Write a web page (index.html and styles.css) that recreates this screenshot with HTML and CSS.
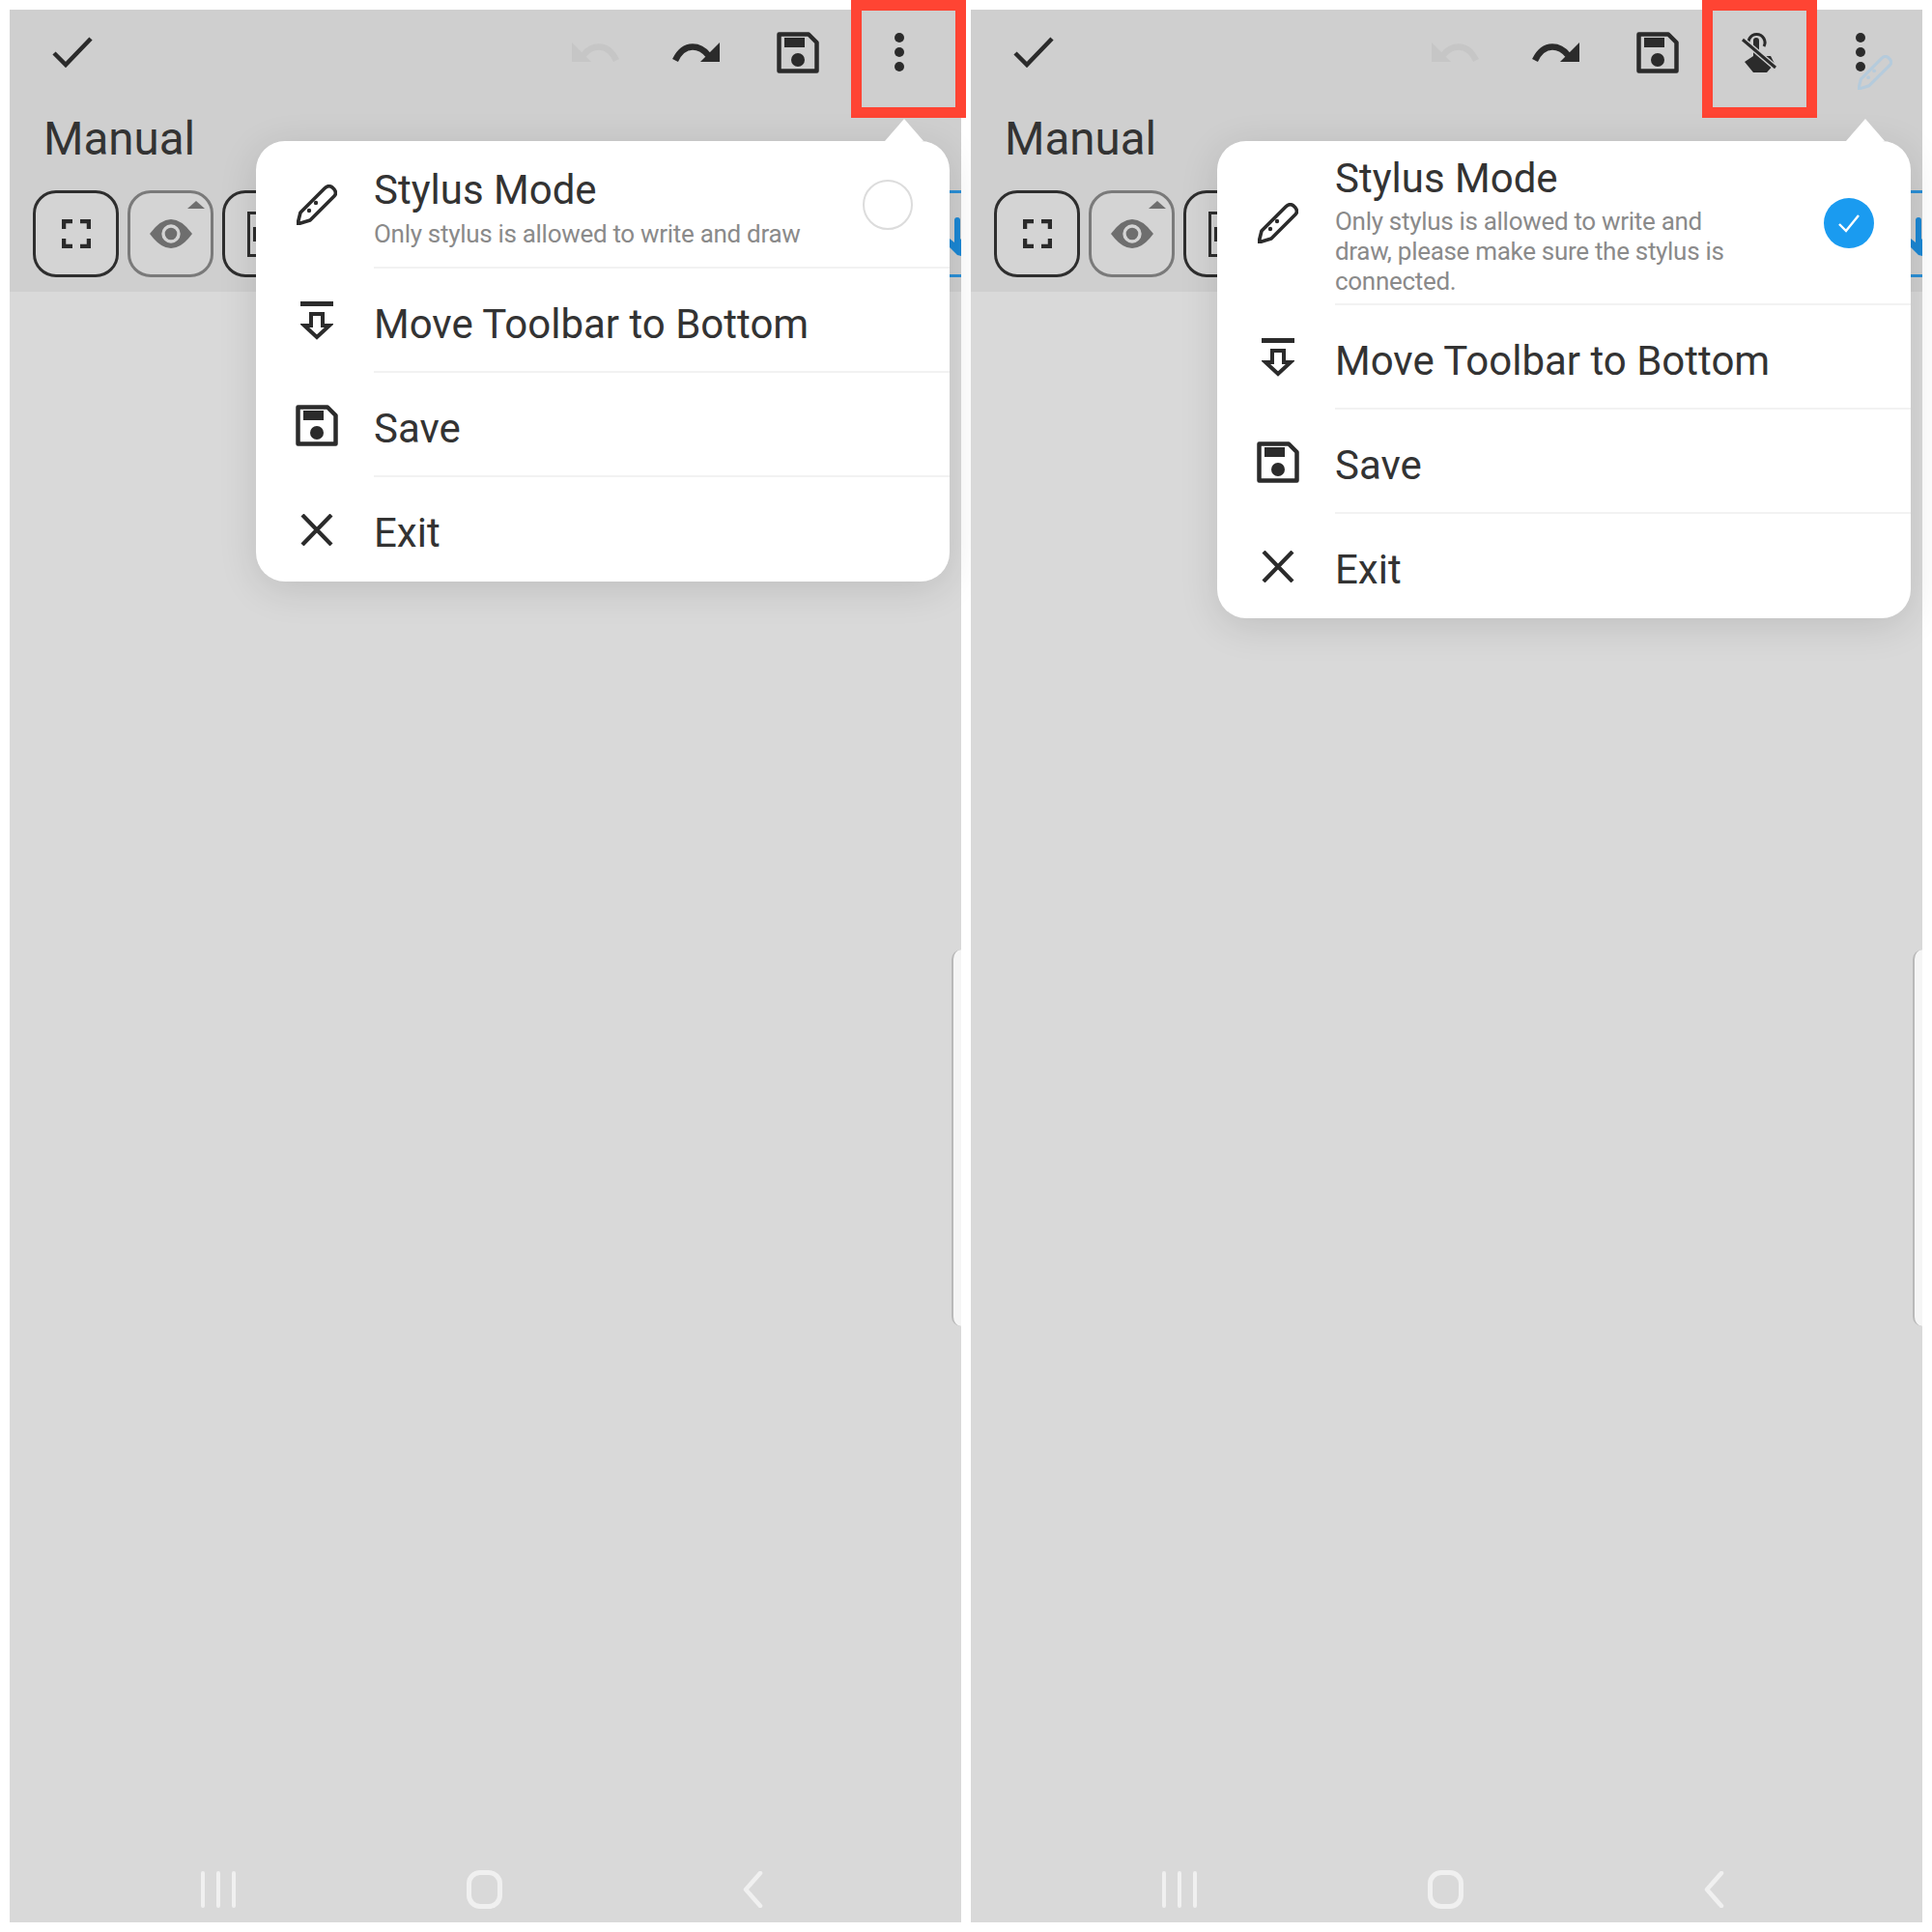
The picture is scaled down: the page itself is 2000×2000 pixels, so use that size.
FILE: index.html
```html
<!DOCTYPE html>
<html>
<head>
  <title>Stylus Mode</title>
  <link rel="stylesheet" href="styles.css">
</head>
<body>
  <svg class="icon-defs">
    <symbol id="i-check" viewBox="0 0 42 32">
      <path d="M2 17 L14 29 L40 2" fill="none" stroke="currentColor" stroke-width="4.5"/>
    </symbol>
    <symbol id="i-redo" viewBox="0 0 50 21">
      <path d="M3 18.5 C8 8 14 4.5 21 4.5 C28 4.5 33 8 37 13" fill="none" stroke="currentColor" stroke-width="6.5"/>
      <path d="M49 0 V20 H29 Z" fill="currentColor"/>
    </symbol>
    <symbol id="i-save" viewBox="0 0 44 43">
      <path d="M2.5 2.5 H33 L41.5 11 V40.5 H2.5 Z" fill="none" stroke="currentColor" stroke-width="4.5" stroke-linejoin="round"/>
      <rect x="8" y="6" width="21" height="10" fill="currentColor"/>
      <circle cx="22" cy="29" r="7" fill="currentColor"/>
    </symbol>
    <symbol id="i-pen" viewBox="0 0 42 42">
      <path d="M1 41 L4 29 L29 4 Q33 0 37 3 L39 5 Q42 9 39 12 L14 37 Z" fill="none" stroke="currentColor" stroke-width="3.6" stroke-linejoin="round"/>
      <circle cx="13" cy="27" r="2.2" fill="currentColor"/>
      <circle cx="20" cy="19" r="2.2" fill="currentColor"/>
    </symbol>
    <symbol id="i-bottom" viewBox="0 0 34 40">
      <rect x="0" y="0" width="34" height="5" fill="currentColor"/>
      <path d="M11 13 H23 V25 H30 L17 37 L4 25 H11 Z" fill="none" stroke="currentColor" stroke-width="4"/>
    </symbol>
    <symbol id="i-close" viewBox="0 0 34 33">
      <path d="M2 1 L32 32 M32 1 L2 32" fill="none" stroke="currentColor" stroke-width="4.2"/>
    </symbol>
    <symbol id="i-full" viewBox="0 0 30 30">
      <path d="M2 10 V2 H11 M19 2 H28 V10 M2 20 V28 H11 M19 28 H28 V20" fill="none" stroke="currentColor" stroke-width="4.5"/>
    </symbol>
    <symbol id="i-eye" viewBox="0 0 44 30">
      <path d="M0 15 Q11 0 22 0 Q33 0 44 15 Q33 30 22 30 Q11 30 0 15 Z" fill="currentColor"/>
      <circle cx="22" cy="15" r="8" fill="none" stroke="#d4d4d4" stroke-width="3.4"/>
    </symbol>
    <symbol id="i-touch" viewBox="0 0 36 42">
      <path d="M8 15 A8.5 8.5 0 1 1 23 15" fill="none" stroke="currentColor" stroke-width="3"/>
      <path d="M12 24 V9 A3 3 0 0 1 18 9 V25 H30 L34 33 L26 42 H12 L3 31 L12 25 Z" fill="currentColor"/>
      <path d="M1 8 L35 37" stroke="#cfcfcf" stroke-width="6"/>
      <path d="M1 8 L35 37" stroke="currentColor" stroke-width="3"/>
    </symbol>
    <symbol id="i-hand" viewBox="0 0 12 40">
      <path d="M5 3 A3 3 0 0 1 11 3 V22 L12 23 V40 L8 39 L0 31 V22 L5 26 Z" fill="currentColor"/>
    </symbol>
    <symbol id="i-back" viewBox="0 0 22 38">
      <path d="M19 2 L4 19 L19 36" fill="none" stroke="currentColor" stroke-width="4.5" stroke-linecap="round" stroke-linejoin="round"/>
    </symbol>
  </svg>

  <div class="screens">
    <section class="phone">
      <div class="toolbar">
        <div class="actions">
          <svg class="check"><use href="#i-check"/></svg>
          <div class="action-slots">
            <span class="slot"><svg class="undo"><use href="#i-redo"/></svg></span>
            <span class="slot"><svg class="redo"><use href="#i-redo"/></svg></span>
            <span class="slot"><svg class="save"><use href="#i-save"/></svg></span>
            <span class="slot"><span class="dots"><i></i><i></i><i></i></span></span>
          </div>
        </div>
        <div class="title">Manual</div>
        <div class="tools">
          <div class="tool"><svg class="full"><use href="#i-full"/></svg></div>
          <div class="tool tool-eye"><svg class="eye"><use href="#i-eye"/></svg></div>
          <div class="tool tool-doc"><span class="doc"></span></div>
          <div class="tool-blue"><svg class="hand"><use href="#i-hand"/></svg></div>
        </div>
      </div>
      <div class="canvas"></div>
      <div class="navbar">
        <span class="nav-lines"><i></i><i></i><i></i></span>
        <span class="nav-home"></span>
        <svg class="nav-back"><use href="#i-back"/></svg>
      </div>

      <div class="handle"></div>
      <div class="mark mark-more"></div>

      <div class="menu">
        <div class="row row-stylus">
          <div class="row-icon"><svg class="ic-pen"><use href="#i-pen"/></svg></div>
          <div class="row-body">
            <div class="stylus-text">
              <div class="label">Stylus Mode</div>
              <div class="sub">Only stylus is allowed to write and draw</div>
            </div>
            <span class="radio"></span>
          </div>
        </div>
        <div class="row">
          <div class="row-icon"><svg class="ic-bottom"><use href="#i-bottom"/></svg></div>
          <div class="row-body"><div class="label">Move Toolbar to Bottom</div></div>
        </div>
        <div class="row">
          <div class="row-icon"><svg class="ic-save"><use href="#i-save"/></svg></div>
          <div class="row-body"><div class="label">Save</div></div>
        </div>
        <div class="row">
          <div class="row-icon"><svg class="ic-close"><use href="#i-close"/></svg></div>
          <div class="row-body"><div class="label">Exit</div></div>
        </div>
      </div>
    </section>

    <section class="phone">
      <div class="toolbar">
        <div class="actions">
          <svg class="check"><use href="#i-check"/></svg>
          <div class="action-slots">
            <span class="slot"><svg class="undo"><use href="#i-redo"/></svg></span>
            <span class="slot"><svg class="redo"><use href="#i-redo"/></svg></span>
            <span class="slot"><svg class="save"><use href="#i-save"/></svg></span>
            <span class="slot"><svg class="touch"><use href="#i-touch"/></svg></span>
            <span class="slot"><span class="dots"><i></i><i></i><i></i></span></span>
          </div>
        </div>
        <div class="title">Manual</div>
        <div class="tools">
          <div class="tool"><svg class="full"><use href="#i-full"/></svg></div>
          <div class="tool tool-eye"><svg class="eye"><use href="#i-eye"/></svg></div>
          <div class="tool tool-doc"><span class="doc"></span></div>
          <div class="tool-blue"><svg class="hand"><use href="#i-hand"/></svg></div>
        </div>
      </div>
      <div class="canvas"></div>
      <div class="navbar">
        <span class="nav-lines"><i></i><i></i><i></i></span>
        <span class="nav-home"></span>
        <svg class="nav-back"><use href="#i-back"/></svg>
      </div>

      <div class="handle"></div>
      <svg class="faded-pen"><use href="#i-pen"/></svg>
      <div class="mark mark-touch"></div>

      <div class="menu">
        <div class="row row-stylus on">
          <div class="row-icon"><svg class="ic-pen"><use href="#i-pen"/></svg></div>
          <div class="row-body">
            <div class="stylus-text">
              <div class="label">Stylus Mode</div>
              <div class="sub">Only stylus is allowed to write and draw, please make sure the stylus is connected.</div>
            </div>
            <span class="radio checked">
              <svg viewBox="0 0 24 20"><path d="M2 11 L9 18 L22 2" fill="none" stroke="#fff" stroke-width="2.4"/></svg>
            </span>
          </div>
        </div>
        <div class="row">
          <div class="row-icon"><svg class="ic-bottom"><use href="#i-bottom"/></svg></div>
          <div class="row-body"><div class="label">Move Toolbar to Bottom</div></div>
        </div>
        <div class="row">
          <div class="row-icon"><svg class="ic-save"><use href="#i-save"/></svg></div>
          <div class="row-body"><div class="label">Save</div></div>
        </div>
        <div class="row">
          <div class="row-icon"><svg class="ic-close"><use href="#i-close"/></svg></div>
          <div class="row-body"><div class="label">Exit</div></div>
        </div>
      </div>
    </section>
  </div>
</body>
</html>
```

FILE: styles.css
```css
body {
  margin: 0;
  background: #fff;
  font-family: Roboto, "Liberation Sans", sans-serif;
  color: #333;
}
.icon-defs {
  display: block;
  width: 0;
  height: 0;
}
.screens {
  display: flex;
  gap: 10px;
  padding: 10px;
  width: 2000px;
  height: 2000px;
  box-sizing: border-box;
}
.phone {
  position: relative;
  display: flex;
  flex-direction: column;
  width: 985px;
  height: 1980px;
  background: #d9d9d9;
}

/* toolbar */
.toolbar {
  height: 292px;
  background: #cfcfcf;
  overflow: hidden;
}
.actions {
  display: flex;
  align-items: center;
  justify-content: space-between;
  height: 88px;
  padding: 0 12px 0 44px;
}
.action-slots {
  display: flex;
}
.slot {
  display: flex;
  align-items: center;
  justify-content: center;
  width: 105px;
  height: 88px;
}
.check {
  width: 42px;
  height: 32px;
  color: #2b2b2b;
}
.undo {
  width: 50px;
  height: 21px;
  color: #c6c6c6;
  transform: scaleX(-1);
}
.redo {
  width: 50px;
  height: 21px;
  color: #2b2b2b;
}
.save {
  width: 44px;
  height: 43px;
  color: #2b2b2b;
}
.touch {
  width: 36px;
  height: 42px;
  color: #2b2b2b;
}
.dots {
  display: flex;
  flex-direction: column;
  gap: 5px;
}
.dots i {
  width: 10px;
  height: 10px;
  border-radius: 50%;
  background: #2b2b2b;
}
.title {
  margin-top: 18px;
  padding-left: 35px;
  font-size: 47.5px;
  line-height: 56px;
}
.tools {
  display: flex;
  gap: 9px;
  margin-top: 25px;
  padding-left: 24px;
}
.tool {
  position: relative;
  display: flex;
  align-items: center;
  justify-content: center;
  flex: none;
  width: 89px;
  height: 90px;
  box-sizing: border-box;
  border: 3px solid #2e2e2e;
  border-radius: 24px;
  background: #d4d4d4;
}
.full {
  width: 30px;
  height: 30px;
  color: #2b2b2b;
}
.tool-eye {
  border-color: #7a7a7a;
}
.tool-eye::after {
  content: "";
  position: absolute;
  top: 8px;
  right: 6px;
  width: 18px;
  height: 8px;
  background: #6e6e6e;
  clip-path: polygon(50% 0, 100% 100%, 0 100%);
}
.eye {
  width: 44px;
  height: 30px;
  color: #6e6e6e;
}
.tool-doc {
  justify-content: flex-start;
  padding-left: 23px;
}
.doc {
  position: relative;
  width: 30px;
  height: 47px;
  box-sizing: border-box;
  border: 3px solid #2e2e2e;
}
.doc::after {
  content: "";
  position: absolute;
  top: 13px;
  left: 3px;
  width: 5px;
  height: 15px;
  background: #2e2e2e;
}
.tool-blue {
  flex: none;
  width: 12px;
  height: 90px;
  margin-left: auto;
  box-sizing: border-box;
  border-top: 3px solid #2b8fd6;
  border-bottom: 3px solid #2b8fd6;
  padding-top: 25px;
}
.hand {
  display: block;
  width: 12px;
  height: 40px;
  color: #1b87d4;
}
.canvas {
  flex: 1;
}

/* bottom navigation */
.navbar {
  display: grid;
  grid-template-columns: 277px 277px 277px;
  justify-items: center;
  align-items: center;
  padding: 0 0 14px 76px;
}
.nav-lines {
  display: flex;
  gap: 12px;
  transform: translateX(1px);
}
.nav-lines i {
  width: 4px;
  height: 38px;
  border-radius: 2px;
  background: #f0f0f0;
}
.nav-home {
  width: 37px;
  height: 40px;
  box-sizing: border-box;
  border: 5px solid #f0f0f0;
  border-radius: 14px;
}
.nav-back {
  width: 22px;
  height: 38px;
  color: #f0f0f0;
}

/* things lying over the screen */
.handle {
  position: absolute;
  top: 973px;
  right: 0;
  width: 10px;
  height: 390px;
  box-sizing: border-box;
  border-left: 2px solid #b9b9b9;
  border-radius: 12px 0 0 12px;
  background: #f5f5f5;
}
.mark {
  position: absolute;
  top: -10px;
  width: 119px;
  height: 122px;
  box-sizing: border-box;
  border: 11px solid #ff4433;
}
.mark-more {
  left: 871px;
}
.mark-touch {
  left: 757px;
}
.faded-pen {
  position: absolute;
  top: 47px;
  left: 918px;
  width: 36px;
  height: 36px;
  color: #b5cbdc;
}

/* popup menu */
.menu {
  position: absolute;
  top: 136px;
  left: 255px;
  width: 718px;
  border-radius: 30px;
  background: #fff;
  box-shadow: 0 8px 40px rgba(0, 0, 0, 0.12);
}
.menu::before {
  content: "";
  position: absolute;
  top: -23px;
  left: 651px;
  width: 40px;
  height: 23px;
  background: #fff;
  clip-path: polygon(50% 0, 100% 100%, 0 100%);
}
.row {
  display: flex;
  height: 108px;
}
.row-icon {
  display: flex;
  align-items: center;
  justify-content: center;
  flex: none;
  width: 126px;
  margin-right: -4px;
  color: #2b2b2b;
}
.row-body {
  display: flex;
  align-items: center;
  justify-content: space-between;
  flex: 1;
  padding-top: 9px;
  box-sizing: border-box;
  border-bottom: 2px solid #f2f2f2;
}
.row:last-child .row-body {
  padding-top: 7px;
  border-bottom: none;
}
.label {
  font-size: 42px;
  line-height: 48px;
  color: #333;
}
.sub {
  margin-top: 6px;
  font-size: 26px;
  line-height: 31px;
  letter-spacing: -0.3px;
  color: #8a8a8a;
}
.row-stylus {
  height: 132px;
}
.row-stylus.on {
  height: 170px;
}
.row-stylus .row-body {
  padding: 0 38px 0 0;
}
.stylus-text {
  padding-top: 8px;
}
.row-stylus.on .sub {
  margin-top: 5px;
  max-width: 430px;
}
.radio {
  flex: none;
  width: 52px;
  height: 52px;
  margin-top: 2px;
  box-sizing: border-box;
  border: 2px solid #dcdcdc;
  border-radius: 50%;
}
.radio.checked {
  display: flex;
  align-items: center;
  justify-content: center;
  border: none;
  background: #1a9bf0;
}
.radio.checked svg {
  width: 24px;
  height: 20px;
}
.ic-pen {
  width: 42px;
  height: 42px;
}
.ic-bottom {
  width: 34px;
  height: 40px;
}
.ic-save {
  width: 44px;
  height: 43px;
}
.ic-close {
  width: 34px;
  height: 33px;
}
```
